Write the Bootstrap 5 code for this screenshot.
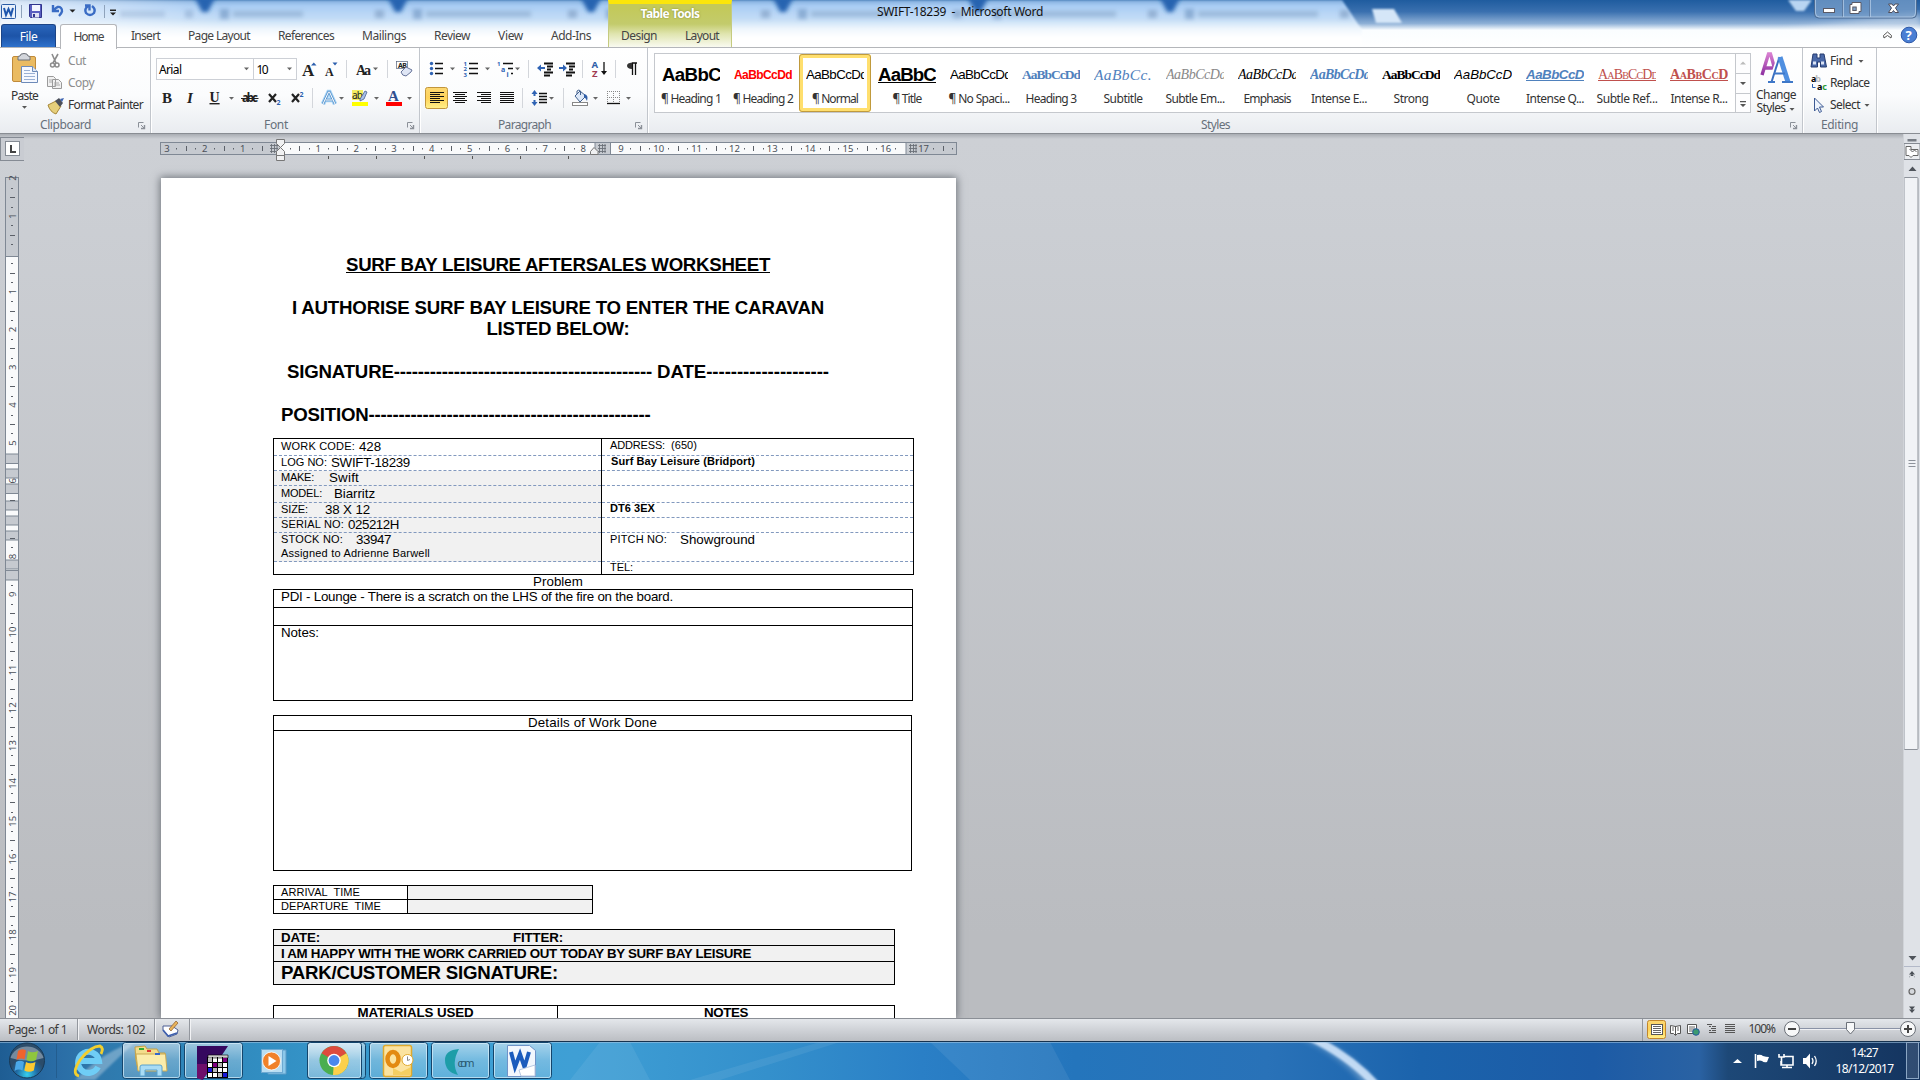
<!DOCTYPE html>
<html lang="en">
<head>
<meta charset="utf-8">
<title>SWIFT-18239 - Microsoft Word</title>
<link href="https://cdn.jsdelivr.net/npm/bootstrap@5.3.0/dist/css/bootstrap.min.css" rel="stylesheet">
<style>
body{width:1920px;height:1080px;overflow:hidden;font:12px/16px "Noto Sans","Open Sans",sans-serif;color:#3b3b3b;background:#fff}
svg{display:block;flex:none}
svg text{white-space:pre}
[data-w]{display:inline-block;white-space:pre;flex:none}
.titlebar{height:48px;position:relative;border-bottom:1px solid #b4b6ba;background:#fff}
.title-art{position:absolute;inset:0}
.title-row{position:relative;height:24px}
.qat{width:877px}
.title-text{padding-top:4px;color:#111}
.tab-file{width:55px;height:23px;margin-left:1px;background:linear-gradient(#2a66bb,#1d54a8 50%,#2f72cc);border:1px solid #1c4587;border-bottom:0;border-radius:3px 3px 0 0;color:#fff}
.tab-home{width:57px;height:25px;margin-left:4px;border:1px solid #b4b6ba;border-bottom:0;border-radius:3px 3px 0 0;background:#fff;position:relative;z-index:2}
.tabs-line{height:24px;position:relative;line-height:23px;color:#444}
.ctx{position:absolute;left:608px;top:0;width:124px;height:47px;background:linear-gradient(#c3c95a 4px,#c3cb6c 20px,#e0e5b0 30px,#fff 46px);border-top:4px solid #fbe60a;border-left:1px solid #c5cb80;border-right:1px solid #c5cb80}
.ctx div{color:#fff;font-weight:bold;text-shadow:0 0 2px #7c8030;margin-top:2px;text-align:center}
.ribbon{height:86px;background:linear-gradient(#fff,#fbfcfd 55%,#e9ecf0);border-bottom:1px solid #898d93}
.rgroup{border-right:1px solid #c2c6cc;box-shadow:1px 0 0 #fff;height:85px;flex:none;color:#333}
.rgroup .cap{height:16px;color:#67707b;line-height:15px}
.gallery{border:1px solid #c5c8cd;background:#fff;height:60px;width:1082px}
.gitem{width:72px;height:58px;text-align:center;padding-top:10px;position:relative;color:#333}
.gitem.sel{outline:1px solid #c09a3c;outline-offset:-1px;box-shadow:inset 0 0 0 4px #ffdf6e;border-radius:3px}
.samp{width:58px;height:24px;overflow:hidden;white-space:nowrap;margin:0 auto;font:13.33px/22px "Liberation Sans",Arial,sans-serif;color:#000;text-align:left}
.samp.serif{font-family:"Liberation Serif",serif;font-size:14px}
.blue{color:#4f81bd}.redd{color:#c0504d}
.glab{line-height:16px;margin-top:3px}
.workspace{height:884px;background:linear-gradient(#a9adb3 0,#cdd0d5 5px,#cccfd4 60px,#babcc0 800px)}
.leftcol{width:24px}
.sheet{margin-left:137px;width:795px;height:840px;background:#fff;box-shadow:0 0 8px 1px #6e737a;overflow:hidden;padding-top:75.5px;font-family:"Liberation Sans",Arial,sans-serif;color:#000}
.lines{margin-left:120px;width:554px;height:184.5px;font-size:18.67px;line-height:21.5px;font-weight:bold}
.lines>div{height:21.5px;white-space:nowrap}
.frame{margin-left:112px;border:1px solid #000}
.t8{font-size:11px}.t10{font-size:13.33px}
.r{display:flex;align-items:center;line-height:13px;padding-left:7px;flex:none}
.colL .r,.up{padding-bottom:2px}
.dash{border-bottom:1px dashed #8299be}
.line{border-bottom:1px solid #000}
.shade{background:#f1f1f1}
.colL{width:328px;border-right:1px solid #000}
.scrollcol{width:17px;background:#dfe2e7;border-left:1px solid #d0d3d8}
.statusbar{height:23px;border-top:1px solid #8b8f96;background:linear-gradient(#e4e7eb,#cfd2d7 50%,#bbbec3);line-height:21px}
.sep{width:1px;height:21px;background:#93979e;box-shadow:1px 0 #f2f3f5;flex:none}
.taskbar{height:39px;border-top:1px solid #16324f;position:relative}
.taskbar>svg{position:absolute;left:0;top:0}
.clock{position:absolute;left:1825px;width:79px;top:3px;color:#fff;text-align:center;line-height:16px}
</style>
<script src="https://cdn.jsdelivr.net/npm/bootstrap@5.3.0/dist/js/bootstrap.bundle.min.js"></script>
</head>
<body class="d-flex flex-column">
<svg width="0" height="0" class="position-absolute">
 <defs>
  <filter id="b2"><feGaussianBlur stdDeviation="3"/></filter>
  <filter id="b1"><feGaussianBlur stdDeviation="1.2"/></filter>
  <filter id="b3" x="-5%" y="-50%" width="110%" height="200%"><feGaussianBlur stdDeviation="2"/></filter>
  <linearGradient id="gDark" x2="0" y2="1"><stop offset="0" stop-color="#1f5c9f"/><stop offset=".25" stop-color="#3a70af"/><stop offset=".5" stop-color="#8eb0d6"/><stop offset=".64" stop-color="#fafdff"/><stop offset="1" stop-color="#fff"/></linearGradient>
  <linearGradient id="gLite" x2="0" y2="1"><stop offset="0" stop-color="#7eaada"/><stop offset=".12" stop-color="#a9cdf4"/><stop offset=".4" stop-color="#c3dcf6"/><stop offset=".62" stop-color="#f0f7fd"/><stop offset=".8" stop-color="#fff"/></linearGradient>
  <linearGradient id="gWhite" x1="0" x2="1"><stop offset="0" stop-color="#fff"/><stop offset="1" stop-color="#fff" stop-opacity="0"/></linearGradient>
  <linearGradient id="gTask"><stop offset="0" stop-color="#1e5d93"/><stop offset=".03" stop-color="#2a6da6"/><stop offset=".05" stop-color="#2f78ac"/><stop offset=".1" stop-color="#2e86ba"/><stop offset=".22" stop-color="#3a9fd3"/><stop offset=".3" stop-color="#3f9fd5"/><stop offset=".4" stop-color="#3490cc"/><stop offset=".48" stop-color="#2a7fc6"/><stop offset=".56" stop-color="#2475bc"/><stop offset=".66" stop-color="#2972b8"/><stop offset=".74" stop-color="#1b63ac"/><stop offset=".83" stop-color="#1c5ba6"/><stop offset=".885" stop-color="#2a62a3"/><stop offset=".9" stop-color="#1d4877"/><stop offset="1" stop-color="#14345f"/></linearGradient>
  <linearGradient id="gBtn" x2="0" y2="1"><stop offset="0" stop-color="#fff" stop-opacity=".55"/><stop offset=".5" stop-color="#fff" stop-opacity=".28"/><stop offset="1" stop-color="#fff" stop-opacity=".18"/></linearGradient>
  <linearGradient id="gSel" x2="0" y2="1"><stop offset="0" stop-color="#fcd873"/><stop offset=".5" stop-color="#ffd35a"/><stop offset="1" stop-color="#fff08a"/></linearGradient>
  <linearGradient id="gPurp" x2="0" y2="1"><stop offset="0" stop-color="#d77fd0"/><stop offset="1" stop-color="#8d2fa0"/></linearGradient>
  <linearGradient id="gBlueA" x2="0" y2="1"><stop offset="0" stop-color="#3a6fc0"/><stop offset="1" stop-color="#5aa0ea"/></linearGradient>
  <radialGradient id="gOrb" cy=".9"><stop offset="0" stop-color="#36d0ee"/><stop offset=".6" stop-color="#1f6ba5"/><stop offset="1" stop-color="#2b4c6a"/></radialGradient>
  <path id="dn" d="M-2.5-1h5L0 1.8z"/>
  <g id="launch" fill="none" stroke="#8b9098"><path d="M.5 5.5v-5h5M3 3l3 3"/><path d="M6.5 3v3.5H3" stroke-width="1.4"/></g>
  <g id="wico"><rect x=".5" y=".5" width="14" height="14" rx="1" fill="#e8f0fa" stroke="#2a5ba5"/><path d="M3 4l2 7 2.5-6L10 11l2-7" fill="none" stroke="#1f57ad" stroke-width="2"/></g>
 </defs>
</svg>

<header class="titlebar">
 <svg class="title-art" width="1920" height="47" id="titleArt">
  <rect width="1920" height="47" fill="url(#gDark)"/>
  <path d="M0 0H1342L1362 30V47H0z" fill="url(#gLite)" filter="url(#b1)"/>
  <rect width="220" height="47" fill="url(#gWhite)" opacity=".7"/>
  <g id="notches" filter="url(#b3)"></g>
  <path d="M1372 9h22l8 14h-26z" fill="#d5e6f8" filter="url(#b1)"/>
  <path d="M1788 0h24l-8 11h-8z" fill="#b9d5f2" filter="url(#b1)"/>
  <path d="M1780 30L1920 12v20z" fill="#fff" opacity=".35" filter="url(#b2)"/>
  <g><path d="M1814.500 -1V14q0 4 4 4H1912.500q4 0 4-4V-1" fill="#7ea3cc" fill-opacity=".7" stroke="#4c6b92"/><path d="M1842.500 0v17M1869.500 0v17" stroke="#5b7ba3"/><path d="M1843.500 0v17M1870.500 0v17M1815.500 0V13q0 4 4 4h92q4 0 4-4V0" fill="none" stroke="#b9d0ea" opacity=".7"/>
  <rect x="1823.500" y="8.500" width="11" height="4" fill="#fff" stroke="#5a5a66"/>
  <path d="M1852 2.500h9v9h-2v2h-9v-9h2z" fill="#fff" stroke="#5a5a66"/><rect x="1852.800" y="7" width="3.400" height="3.500" fill="#7ea3cc" stroke="#5a5a66"/>
  <path d="M1886 4h3.500l1.500 2 1.500-2h3.500l-3 4 3 4.500h-3.500l-1.500-2-1.500 2h-3.500l3-4.500z" fill="#fff" stroke="#4e4e5c" transform="translate(2.500)"/></g>
  <path d="M1884 38l-.5-2.500 4-3.500 4 3.500-.5 2.500-3.500-2.500z" fill="#fff" stroke="#555"/>
  <circle cx="1909" cy="35" r="7.800" fill="#4a7fd4" stroke="#2d58a8"/><text x="1905.500" y="40" font-size="13" font-weight="bold" fill="#fff">?</text>
 </svg>
 <div class="ctx"><div><span data-w="59">Table Tools</span></div></div>
 <div class="title-row d-flex">
  <div class="qat">
   <svg width="130" height="24" viewBox="0 0 130 24">
    <use href="#wico" x="1" y="4"/><path d="M21.500 5v13M104.500 5v13" stroke="#8fa3bb"/>
    <path d="M29.500 4.500h12v13h-11l-1-1z" fill="#5a5fc0" stroke="#30358c"/><rect x="32" y="5" width="8" height="6" fill="#f4f6ff"/><rect x="32" y="13" width="7" height="4.500" fill="#dfe2f4"/><rect x="33" y="14" width="2" height="3" fill="#30358c"/>
    <path d="M53 5v6h6M54 10q4-5 7-2 3 3-2 8" fill="none" stroke="#3a6cc4" stroke-width="2.400"/>
    <path d="M69.500 9.500h6l-3 3zM110 12.500h6l-3 3zM110 9.500h6v1.500h-6z" fill="#222"/>
    <path d="M92 6q4 3 2 7-4 4-8 0-2-4 2-7M85 5.500h4.500v5" fill="none" stroke="#3a6cc4" stroke-width="2.400"/>
   </svg>
  </div>
  <div class="title-text"><span data-w="166">SWIFT-18239  -  Microsoft Word</span></div>
 </div>
 <div class="tabs-line d-flex" id="tabs">
  <div class="tab-file text-center"><span data-w="17.500">File</span></div>
  <div class="tab-home text-center"><span data-w="30">Home</span></div>
 </div>
</header>

<section class="ribbon d-flex">
 <div class="rgroup" style="width:151px">
  <div class="d-flex" style="height:69px">
   <div style="width:46px;padding-left:11px">
    <svg width="30" height="40" viewBox="11 48 30 40"><rect x="12.500" y="56.500" width="23" height="25" rx="1.500" fill="#eabb62" stroke="#c08a3a"/><path d="M18 60v-3q0-1 2-1 0-2.500 4-2.500t4 2.500q2 0 2 1v3z" fill="#d3d6dc" stroke="#6b7078"/><path d="M21.500 66.500h11l5 5v11h-16z" fill="#f5f8ff" stroke="#6d8ab8"/><path d="M32.500 66.500v5h5" fill="#dce6f5" stroke="#6d8ab8"/><path d="M24 70.500h6M24 73.500h11M24 76.500h11M24 79.500h11" stroke="#9ab0d4"/></svg>
    <div style="line-height:15px"><span data-w="27">Paste</span></div><svg width="27" height="8" viewBox="0 0 27 8"><use href="#dn" x="13.500" y="4" fill="#555"/></svg>
   </div>
   <div class="d-flex flex-column" style="padding-top:2px">
    <div class="d-flex align-items-center" style="height:22px;color:#8d8d8d"><svg width="22" height="20" viewBox="48 51 22 20"><path d="M54 54l4 9M60 54l-5 9" stroke="#8c8c8c" stroke-width="1.600"/><circle cx="54.500" cy="65" r="2" fill="none" stroke="#8c8c8c" stroke-width="1.500"/><circle cx="59" cy="65" r="2" fill="none" stroke="#8c8c8c" stroke-width="1.500"/></svg><span data-w="18">Cut</span></div>
    <div class="d-flex align-items-center" style="height:22px;color:#8d8d8d"><svg width="22" height="20" viewBox="48 73 22 20"><path d="M49.500 76.500h6l2 2v8h-8zM54.500 79.500h6l3 3v6h-9z" fill="#f1f1f1" stroke="#9a9a9a"/><path d="M51 80h3M51 82h3M56 83h5M56 85h6" stroke="#aaa"/></svg><span data-w="26">Copy</span></div>
    <div class="d-flex align-items-center" style="height:22px"><svg width="22" height="20" viewBox="47 95 22 20"><path d="M49 105l8-4 5 5-5 8q-6-2-8-9z" fill="#e6cf7b" stroke="#a78738"/><path d="M56 101l4-3 4 5-3 4z" fill="#4b4f5a"/><path d="M61 99l4-1-2 4z" fill="#3b62b0"/></svg><span data-w="75">Format Painter</span></div>
   </div>
  </div>
  <div class="cap d-flex"><span style="width:40px"></span><span data-w="51">Clipboard</span><svg width="8" height="8" viewBox="0 0 8 8" style="margin:5px 0 0 47px"><use href="#launch"/></svg></div>
 </div>

 <div class="rgroup" style="width:269px">
  <svg width="268" height="69" viewBox="151 48 268 69" fill="#222">
   <g fill="#fff" stroke="#cdd0d6"><rect x="156.500" y="58.500" width="97" height="21"/><rect x="253.500" y="58.500" width="43" height="21"/></g>
   <text x="159" y="73.500" font-size="12" textLength="23" fill="#000">Arial</text><text x="256.500" y="73.500" font-size="12" textLength="12" fill="#000">10</text>
   <g fill="#666"><use href="#dn" x="246.500" y="68.500"/><use href="#dn" x="289.500" y="68.500"/><use href="#dn" x="375.500" y="68.500"/><use href="#dn" x="231.500" y="98"/><use href="#dn" x="341.500" y="98"/><use href="#dn" x="376.500" y="98"/><use href="#dn" x="409.500" y="98"/></g>
   <g font-family="Liberation Serif,serif" font-weight="bold"><text x="302" y="76" font-size="17">A</text><text x="325" y="76" font-size="12">A</text><text x="356" y="75" font-size="14" textLength="15">Aa</text>
   <text x="162" y="103" font-size="15">B</text><text x="187" y="103" font-size="15" font-style="italic">I</text><text x="209.500" y="102" font-size="14" text-decoration="underline">U</text></g>
   <path d="M311 65.500h5.500l-2.700-3zM332.500 62.500h5l-2.500 3z" fill="#2c5fae"/>
   <path d="M346.500 60v18M387.500 60v18M312.500 88v20" stroke="#d3d6db"/>
   <rect x="396.500" y="61.500" width="11" height="7" fill="#fff" stroke="#55617a" stroke-width=".7"/><text x="398" y="68" font-size="7" font-weight="bold" textLength="9">AB</text><path d="M401 72l5-5 6 3-1 2-5 4q-4 0-5-4z" fill="#dfe6f5" stroke="#67749a"/>
   <text x="242" y="102" font-size="11.500" font-weight="bold" textLength="16">abc</text><path d="M241 98.500h17.500" stroke="#222"/>
   <path d="M269 94l7 8M276 94l-7 8M292 94l7 8M299 94l-7 8" stroke="#222" stroke-width="2.200"/><text x="276.500" y="105" font-size="7" fill="#2c5fae" font-weight="bold">2</text><text x="299.500" y="96.500" font-size="7" fill="#2c5fae" font-weight="bold">2</text>
   <path d="M323 104l5.500-12h1l5.500 12M325.500 100h7" fill="none" stroke="#a8d5f7" stroke-width="4.500"/><path d="M323 104l5.500-12h1l5.500 12M325.500 100h7" fill="none" stroke="#5a94cc" stroke-width="2.600"/><path d="M323 104l5.500-12h1l5.500 12M325.500 100h7" fill="none" stroke="#fff" stroke-width="1"/>
   <rect x="352" y="90" width="11" height="10" fill="#f4ee62"/><text x="352" y="98.500" font-size="10" textLength="11">ab</text><path d="M360 99l5-8 2 1-3 7-4 2z" fill="#a8bfe8" stroke="#47608f" stroke-width=".8"/><rect x="352" y="102" width="16" height="4" fill="#ff0"/>
   <text x="388" y="100.500" font-size="15" font-weight="bold" font-family="Liberation Serif,serif" fill="#2e4f8f">A</text><rect x="386" y="102" width="16" height="4" fill="#f00"/>
  </svg>
  <div class="cap d-flex"><span style="width:113px"></span><span data-w="24">Font</span><svg width="8" height="8" viewBox="0 0 8 8" style="margin:5px 0 0 119px"><use href="#launch"/></svg></div>
 </div>

 <div class="rgroup" style="width:228px">
  <svg width="227" height="69" viewBox="420 48 227 69" stroke="#111" stroke-width="1.300">
   <rect x="425.500" y="87.500" width="22" height="21" rx="2" fill="url(#gSel)" stroke="#c2963c" stroke-width="1"/>
   <path d="M435 63.500h8M435 68.500h8M435 73.500h8M469 63.500h9M469 68.500h9M469 73.500h9M503 63.500h10M508 68.500h5M511 73.500h2"/>
   <path d="M544 63.500h9M547 66.500h6M547 69.500h4M544 72.500h9M544 75.500h6M566 63.500h9M569 66.500h6M569 69.500h4M566 72.500h9M566 75.500h6" stroke-width="1.800"/>
   <g stroke="none" fill="#2f63b4"><circle cx="431.500" cy="63.500" r="1.700"/><circle cx="431.500" cy="68.500" r="1.700"/><circle cx="431.500" cy="73.500" r="1.700"/><text font-size="6" font-weight="bold" x="463.500" y="65.500">1</text><text font-size="6" font-weight="bold" x="463.500" y="71">2</text><text font-size="6" font-weight="bold" x="463.500" y="76.500">3</text><text font-size="6" font-weight="bold" x="497" y="65.500">1</text><text font-size="7" font-weight="bold" x="501" y="71.500">a</text><text font-size="7" font-weight="bold" x="506.500" y="77">i</text><path d="M537 68l4-3.500v2.500h4v2h-4v2.500zM567 68l-4-3.500v2.500h-4v2h4v2.500z"/><path d="M534.500 90l3 4h-2v2h-2v-2h-2zM534.500 106l3-4h-2v-2h-2v2h-2z"/></g>
   <path d="M528.500 60v18M582.500 60v18M615.500 60v18M522.500 88v20M563.500 88v20" stroke="#d3d6db" stroke-width="1"/>
   <g stroke="none" font-weight="bold" font-size="9.500"><text x="591.500" y="68" fill="#2f5fa8">A</text><text x="592" y="76.500" fill="#a03a50">Z</text></g><path d="M604 62v11"/><path d="M601 71h6l-3 4z" fill="#111" stroke="none"/>
   <path d="M632 63h5M632.500 63v12M635.500 63v12" fill="none"/><path d="M632 62.500q-5 .5-5 3.200 0 3 5 3.300z" fill="#333" stroke="none"/>
   <path d="M430 92.500h14M430 94.500h10M430 96.500h14M430 98.500h10M430 100.500h14M430 102.500h10M453 92.500h14M455 94.500h10M453 96.500h14M455 98.500h10M453 100.500h14M455 102.500h10M477 92.500h14M481 94.500h10M477 96.500h14M481 98.500h10M477 100.500h14M481 102.500h10M500 92.500h14M500 94.500h14M500 96.500h14M500 98.500h14M500 100.500h14M500 102.500h14" stroke-width="1"/>
   <path d="M539 93.500h8M539 96.500h8M539 99.500h8M539 102.500h8"/>
   <path d="M575 96l5-5 6 5-6 6z" fill="#dde8f8" stroke="#42618f" stroke-width="1"/><path d="M577 94v-3q2-2 3.500 0v4" fill="none" stroke="#42618f" stroke-width="1"/><path d="M584 94q5 1 3 7-2-4-3-4z" fill="#2f5ea8" stroke="none"/><rect x="572.500" y="102.500" width="15" height="3" fill="#fff" stroke="#888" stroke-width="1"/>
   <path d="M607.500 91v12M613.500 91v12M619.500 91v12M607 91.500h13M607 97.500h13" stroke="#888" stroke-dasharray="1 1" stroke-width="1"/><path d="M607 103.500h13"/>
   <g fill="#666" stroke="none"><use href="#dn" x="452.500" y="68.500"/><use href="#dn" x="487.500" y="68.500"/><use href="#dn" x="517.500" y="68.500"/><use href="#dn" x="551.500" y="98"/><use href="#dn" x="595.500" y="98"/><use href="#dn" x="628.500" y="98"/></g>
  </svg>
  <div class="cap d-flex"><span style="width:78px"></span><span data-w="53">Paragraph</span><svg width="8" height="8" viewBox="0 0 8 8" style="margin:5px 0 0 84px"><use href="#launch"/></svg></div>
 </div>

 <div class="rgroup" style="width:1155px">
  <div class="d-flex" style="height:69px;padding:5px 0 0 6px">
   <div class="gallery d-flex" id="gallery"></div>
   <svg width="15" height="60" viewBox="0 0 15 60"><g fill="#fdfdfe" stroke="#c5c8cd"><rect x="-.5" y=".5" width="15" height="20"/><rect x="-.5" y="20.500" width="15" height="20"/><rect x="-.5" y="40.500" width="15" height="19"/></g><path d="M4 11.500h6l-3-3z" fill="#bbb"/><path d="M4 29h6l-3 3zM4 51h6l-3 3zM4 48h6v1.200H4z" fill="#555"/></svg>
   <div class="text-center" style="width:50px;line-height:13px">
    <svg width="50" height="36" viewBox="1751 53 50 36" style="margin-top:-1px"><path d="M1762 76l6.500-21h2l6 21M1764 69h10" fill="none" stroke="url(#gPurp)" stroke-width="3.400"/><path d="M1768 83h7M1771 83l8.500-25L1789 83M1783 83h10M1774 74.500h11" fill="none" stroke="#fff" stroke-width="5"/><path d="M1771.500 83l8-25" stroke="#3a6fc0" stroke-width="2"/><path d="M1780 58l8 25" stroke="#4f8fe0" stroke-width="5"/><path d="M1768 83h7M1782 83h11M1774 74.500h11" stroke="#3f78c8" stroke-width="2"/></svg>
    <span data-w="40">Change</span><br><span data-w="29">Styles</span><svg width="8" height="8" viewBox="0 0 8 8" class="d-inline-block" style="margin-left:2px"><use href="#dn" x="4" y="4" fill="#555"/></svg>
   </div>
  </div>
  <div class="cap d-flex"><span style="width:553px"></span><span data-w="29">Styles</span><svg width="8" height="8" viewBox="0 0 8 8" style="margin:5px 0 0 560px"><use href="#launch"/></svg></div>
 </div>

 <div class="rgroup" style="width:74px">
  <div style="height:69px;padding-top:2px">
   <div class="d-flex align-items-center" style="height:22px"><svg width="27" height="20" viewBox="1803 51 27 20"><path d="M1813 54h4v4h3v-4h4l2.500 13h-6v-5h-3v5h-6.500z" fill="#4a69a8" stroke="#263c70"/><path d="M1813 63h3M1821 63h3" stroke="#dbe4f5" stroke-width="3"/></svg><span data-w="22.500">Find</span><svg width="16" height="8" viewBox="0 0 16 8"><use href="#dn" x="8" y="4" fill="#555"/></svg></div>
   <div class="d-flex align-items-center" style="height:22px"><svg width="27" height="20" viewBox="1803 73 27 20"><text x="1811" y="81.500" font-size="9" font-weight="bold" textLength="10">a<tspan fill="#bbb">b</tspan></text><text x="1817" y="90" font-size="9" font-weight="bold" textLength="10">a<tspan fill="#2a9a3a">c</tspan></text><path d="M1812.500 84v3.500h3" fill="none" stroke="#2c5fae"/></svg><span data-w="39.500">Replace</span></div>
   <div class="d-flex align-items-center" style="height:22px"><svg width="27" height="20" viewBox="1803 95 27 20"><path d="M1814.500 98v13l3-3 2 4.500 2-1-2-4.500h4z" fill="#eef4fd" stroke="#3d5a94"/></svg><span data-w="30">Select</span><svg width="14" height="8" viewBox="0 0 14 8"><use href="#dn" x="7" y="4" fill="#555"/></svg></div>
  </div>
  <div class="cap text-center"><span data-w="37">Editing</span></div>
 </div>
</section>

<main class="workspace d-flex">
 <div class="leftcol"><svg width="24" height="884" viewBox="0 134 24 884" id="vruler"></svg></div>
 <div class="flex-grow-1">
  <svg width="940" height="44" viewBox="24 134 940 44" id="hruler"></svg>
  <article class="sheet">
   <div class="lines text-center">
    <div><u data-w="424">SURF BAY LEISURE AFTERSALES WORKSHEET</u></div><div></div>
    <div><span data-w="532">I AUTHORISE SURF BAY LEISURE TO ENTER THE CARAVAN</span></div>
    <div><span data-w="143">LISTED BELOW:</span></div><div></div>
    <div><span data-w="365">SIGNATURE-------------------------------------------</span><span data-w="177"> DATE--------------------</span></div><div></div>
    <div class="text-start"><span data-w="369.500">POSITION-----------------------------------------------</span></div>
   </div>
   <div class="frame d-flex t8" style="width:641px;height:137px">
    <div class="colL">
     <div class="r dash" style="height:17px"><span data-w="74">WORK CODE:</span><span data-w="22" class="t10 ms-1">428</span></div>
     <div class="r dash" style="height:15px"><span data-w="46">LOG NO:</span><span data-w="79" class="t10 ms-1">SWIFT-18239</span></div>
     <div class="r dash shade" style="height:15px"><span data-w="33">MAKE:</span><span data-w="30" class="t10" style="margin-left:15px">Swift</span></div>
     <div class="r dash shade" style="height:17px"><span data-w="41">MODEL:</span><span data-w="41" class="t10" style="margin-left:12px">Biarritz</span></div>
     <div class="r dash shade" style="height:15px"><span data-w="27">SIZE:</span><span data-w="45" class="t10" style="margin-left:17px">38 X 12</span></div>
     <div class="r dash shade" style="height:15px"><span data-w="63">SERIAL NO:</span><span data-w="51" class="t10 ms-1">025212H</span></div>
     <div class="shade dash" style="height:29px"><div class="r" style="height:14px"><span data-w="62">STOCK NO:</span><span data-w="35" class="t10" style="margin-left:13px">33947</span></div><div class="r pb-0" style="height:13px"><span data-w="149">Assigned to Adrienne Barwell</span></div></div>
    </div>
    <div class="flex-grow-1">
     <div class="r dash" style="height:17px;padding-bottom:3px;padding-left:8px"><span data-w="55">ADDRESS:</span><span data-w="26" style="margin-left:6px">(650)</span></div>
     <div class="r dash fw-bold" style="height:15px;padding-bottom:3px;padding-left:9px"><span data-w="144">Surf Bay Leisure (Bridport)</span></div>
     <div class="r dash" style="height:15px"></div>
     <div class="r dash" style="height:17px"></div>
     <div class="r dash fw-bold" style="height:15px;padding-bottom:3px;padding-left:8px"><span data-w="45">DT6 3EX</span></div>
     <div class="r dash" style="height:15px"></div>
     <div class="dash" style="height:29px"><div class="r up" style="height:14px;padding-left:8px"><span data-w="57">PITCH NO:</span><span data-w="75" class="t10" style="margin-left:13px">Showground</span></div></div>
     <div class="r up" style="height:12px;padding-left:8px"><span data-w="23">TEL:</span></div>
    </div>
   </div>
   <div class="t10 r up" style="height:14px;padding-left:372px"><span data-w="50">Problem</span></div>
   <div class="frame t10" style="width:640px;height:112px">
    <div class="r line" style="height:18px;padding-bottom:4px"><span data-w="392">PDI - Lounge - There is a scratch on the LHS of the fire on the board.</span></div>
    <div class="r line" style="height:18px"></div>
    <div class="r up" style="height:15px"><span data-w="38">Notes:</span></div>
   </div>
   <div class="frame t10" style="width:639px;height:156px;margin-top:14px">
    <div class="r line justify-content-center" style="height:15px;padding:0 0 2px"><span data-w="129">Details of Work Done</span></div>
   </div>
   <div class="frame t8 d-flex" style="width:320px;height:29px;margin-top:14px">
    <div style="width:134px;border-right:1px solid #000"><div class="r line" style="height:14px"><span data-w="79">ARRIVAL  TIME</span></div><div class="r" style="height:13px"><span data-w="100">DEPARTURE  TIME</span></div></div>
    <div class="flex-grow-1 shade"><div class="line" style="height:14px"></div></div>
   </div>
   <div class="frame t10 fw-bold shade" style="width:622px;height:56px;margin-top:15px">
    <div class="r line" style="height:16px"><span data-w="39">DATE:</span><span data-w="50" style="margin-left:193px">FITTER:</span></div>
    <div class="r line" style="height:16px"><span data-w="470">I AM HAPPY WITH THE WORK CARRIED OUT TODAY BY SURF BAY LEISURE</span></div>
    <div class="r" style="height:22px;font-size:18.67px;line-height:20px"><span data-w="277">PARK/CUSTOMER SIGNATURE:</span></div>
   </div>
   <div class="frame t10 fw-bold d-flex" style="width:622px;height:30px;margin-top:20px;line-height:14px">
    <div class="text-center" style="width:284px;border-right:1px solid #000"><span data-w="116">MATERIALS USED</span></div>
    <div class="flex-grow-1 text-center"><span data-w="44">NOTES</span></div>
   </div>
  </article>
 </div>
 <div class="scrollcol">
  <svg width="17" height="884" viewBox="1903.500 134 17 884"><rect x="1907" y="139" width="9" height="2.500" fill="#777c84"/><rect x="1903.500" y="143.500" width="16" height="16" fill="#eceef1" stroke="#858a92"/><path d="M1905.500 146.500h5v3h7v6h-5l-2 2-2-2h-3zM1909 149l3 3 2-2 2 2" fill="#fff" stroke="#666"/>
  <path d="M1908 171h8l-4-4.500zM1908 956h8l-4 4.500z" fill="#4f545b"/><rect x="1903.500" y="177.500" width="14" height="572" rx="1" fill="#f1f3f6" stroke="#8e939b"/><path d="M1908 460.500h7M1908 463.500h7M1908 466.500h7" stroke="#8e939b"/><path d="M1903 966.500h17" stroke="#b3b9c8"/>
  <g fill="#4a4f56"><path d="M1908.500 974.500h6l-3-3.500zM1908.500 977.500h6l-3-3.500zM1909 976h5v1.500h-5zM1908.500 1006.500h6l-3 3.500zM1908.500 1009.500h6l-3 3.500z"/></g><circle cx="1911.500" cy="991.500" r="3" fill="#d4d7dc" stroke="#666" stroke-width="1.200"/></svg>
 </div>
</main>

<footer class="statusbar d-flex">
 <span style="width:8px"></span><span data-w="59">Page: 1 of 1</span><span style="width:10px"></span><i class="sep"></i><span style="width:9px"></span><span data-w="58">Words: 102</span><span style="width:9px"></span><i class="sep"></i>
 <svg width="34" height="21" viewBox="155 1019 34 21"><path d="M163 1026h9l6 4-1 4-8 3-6-7z" fill="#fff" stroke="#4c5f94"/><path d="M163 1030l5 6 9-3" fill="none" stroke="#3f60ae" stroke-width="1.800"/><path d="M169 1029l7-8 2 2-7 8z" fill="#e8b25a" stroke="#8a5a2a" stroke-width=".7"/></svg>
 <i class="sep"></i>
 <svg class="ms-auto" width="280" height="22" viewBox="1640 1019 280 22">
  <path d="M1642.500 1019v22" stroke="#93979e"/><rect x="1647.500" y="1020.500" width="18" height="18" rx="2" fill="url(#gSel)" stroke="#c2862c"/>
  <g fill="#fff" stroke="#555"><rect x="1651.500" y="1024.500" width="11" height="10"/><path d="M1670.500 1025.500l5 1 5-1v8h-3l-2 2-2-2h-3zM1675.500 1026v9M1687.500 1024.500h9v9h-9z"/></g>
  <path d="M1653 1026.500h8M1653 1028.500h8M1653 1030.500h8M1653 1032.500h8M1672 1028h2M1672 1030h2M1677 1028h2M1677 1030h2M1689 1027h6M1689 1029h6M1689 1031h4" stroke="#666"/><circle cx="1696" cy="1032" r="3.300" fill="#3b9a70" stroke="#2558a0"/>
  <path d="M1707 1024.500h5M1709 1026.500h2M1712 1026.500h4M1711 1028.500h5M1709 1030.500h2M1712 1030.500h4M1709 1032.500h7M1725 1024.500h10M1725 1026.500h10M1725 1028.500h10M1725 1030.500h10M1725 1032.500h10" stroke="#555"/>
  <text x="1748.500" y="1033" font-size="12" textLength="27.500" fill="#3b3b3b">100%</text>
  <path d="M1800 1028.500h100" stroke="#8a92a6"/><path d="M1800 1029.500h100" stroke="#f0f1f4"/><g fill="#f7f8f9" stroke="#6b7078"><circle cx="1792" cy="1029" r="7.500"/><circle cx="1908" cy="1029" r="7.500"/><path d="M1846.500 1022.500h8v7l-4 4.500-4-4.500z"/></g><path d="M1788 1029h8M1904 1029h8M1908 1025v8" stroke="#444" stroke-width="2"/>
 </svg>
</footer>

<nav class="taskbar">
 <svg width="1920" height="38" viewBox="0 1042 1920 38">
  <rect y="1042" width="1920" height="38" fill="url(#gTask)"/>
  <g fill="#fff"><path d="M1298 1036h16q42 22 62 48h-12q-24-30-66-48z" opacity=".35" filter="url(#b2)"/><path d="M1308 1036q42 20 69 50" fill="none" stroke="#d5e8fd" stroke-width="8" opacity=".85" filter="url(#b1)"/><path d="M600 1042h30l20 38h-80zM820 1042h20l-120 38h-30zM930 1042h120l20 38h-100z" opacity=".07"/><path d="M75 1080q30-30 60-38l-40 38z" opacity=".3" filter="url(#b1)"/></g>
  <path d="M0 1042.500h1920" stroke="#9fc4e2" opacity=".6"/>
  <path d="M56.500 1044v34" stroke="#1d4f7a" opacity=".5"/>
  <g fill="url(#gBtn)" stroke="#14456c"><rect x="122.500" y="1042.500" width="58" height="36" rx="3"/><rect x="184.500" y="1042.500" width="58" height="36" rx="3"/><rect x="307.500" y="1042.500" width="58" height="36" rx="3"/><rect x="307.500" y="1042.500" width="54" height="36" rx="3"/><rect x="369.500" y="1042.500" width="58" height="36" rx="3"/><rect x="431.500" y="1042.500" width="58" height="36" rx="3"/><rect x="493.500" y="1042.500" width="58" height="36" rx="3"/></g>
  <g fill="none" stroke="#d8effb" opacity=".7"><rect x="123.500" y="1043.500" width="56" height="34" rx="2"/><rect x="185.500" y="1043.500" width="56" height="34" rx="2"/><rect x="308.500" y="1043.500" width="52" height="34" rx="2"/><rect x="370.500" y="1043.500" width="56" height="34" rx="2"/><rect x="432.500" y="1043.500" width="56" height="34" rx="2"/><rect x="494.500" y="1043.500" width="56" height="34" rx="2"/></g>
  <circle cx="27" cy="1060.500" r="17.500" fill="url(#gOrb)" stroke="#183a58"/><path d="M10.500 1058a17 15 0 0 1 33 0q-16 5-33 0z" fill="#fff" opacity=".35"/>
  <path d="M18 1051q4-3 8-.5l-1.500 9q-4-2-8 .5z" fill="#f0642c"/><path d="M28 1051q4 2.500 10 0l-2 9q-5 2.500-9.500 0z" fill="#8fc63d"/><path d="M16 1062q4-2.500 8 0l-1.500 8.500q-4-2-8 .5z" fill="#4aa8e8"/><path d="M26 1062q4 2.500 9.500 0l-1.700 8.500q-5 2.500-9.500 0z" fill="#fcc931"/>
  <path d="M98 1067a10.500 10.500 0 1 1 1-6h-20" fill="none" stroke="#6fcdf6" stroke-width="6"/><path d="M79 1076q-8-2 1-16 11-14 20-14 4 2 1 8" fill="none" stroke="#f2cf2f" stroke-width="2.800"/>
  <path d="M135 1047l10-1 2 3h10l2 4h6v17h-27q-3-11-3-23z" fill="#f3dc8b" stroke="#c2a046"/><path d="M136 1054h29.500l1.500 17h-29z" fill="#fbecab" stroke="#c9aa55"/><path d="M139 1048h5v2h-5z" fill="#3a3"/><path d="M147 1050h4v2h-4z" fill="#d33"/><path d="M155 1053h5v2h-5z" fill="#36c"/><path d="M140 1076v-9q0-2 2-2h18q2 0 2 2v9h-5v-6h-12v6z" fill="#a9dcf5" stroke="#5aa2cd"/>
  <path d="M197 1046h31l-8 12q-14 14-17 22l-6-4z" fill="#35085f"/><path d="M197 1064h10v10l-5 6-5-2z" fill="#6d0f6a"/><rect x="207.500" y="1057.500" width="20" height="20" fill="#fff" stroke="#000"/><path d="M208 1055h20v3h-20z" fill="#ccc" stroke="#000" stroke-width=".6"/><path d="M213 1062h5v5h-5zM223 1058h4v4h-4z" fill="#800080"/><path d="M208 1067h5v5h-5zM222 1072h5v5h-5z" fill="#1818d8"/><path d="M208 1058h5v4h-5zM218 1062h4v5h-4zM213 1067h5v5h-5zM218 1072h4v5h-4z" fill="#b9b9b9"/><path d="M212.500 1057v20M217.500 1057v20M222.500 1057v20M208 1062.500h20M208 1067.500h20M208 1072.500h20" stroke="#000"/>
  <path d="M268 1050h18v24h-18z" fill="#8cc8ea" stroke="#5c9cc8"/><rect x="261.500" y="1049.500" width="21" height="23" fill="#b9def3" stroke="#6da9d2"/><circle cx="271.500" cy="1061" r="9" fill="#f0812a" stroke="#fff" stroke-width=".8"/><path d="M268.500 1056v10l8-5z" fill="#fff"/>
  <circle cx="334" cy="1060.500" r="14.500" fill="#4aae50"/><path d="M334 1060.500L321.500 1053.200A14.500 14.500 0 0 1 346.500 1053.200z" fill="#dd4b3e"/><path d="M334 1060.500l12.500-7.300A14.500 14.500 0 0 1 333 1075z" fill="#fcd04b"/><circle cx="334" cy="1060.500" r="6.800" fill="#fff"/><circle cx="334" cy="1060.500" r="5.400" fill="#4a87ee"/>
  <rect x="383.500" y="1045.500" width="28" height="31" rx="2" fill="#fbe3a0" stroke="#e0a92c" stroke-width="1.500"/><ellipse cx="393" cy="1059" rx="5.500" ry="7" fill="none" stroke="#e38a12" stroke-width="4.500"/><circle cx="407.500" cy="1060" r="5.500" fill="#fff" stroke="#e0a92c"/><path d="M407.500 1056.500v4l2.500-1" fill="none" stroke="#888"/><path d="M393 1068l8 4 10-5v8h-18z" fill="#f5cf62"/>
  <path d="M459 1049q-14 1-14 11 0 12 13 15-7-12 1-26z" fill="#1d9da8"/><text x="457.500" y="1067" font-size="11" fill="#2a5a70" textLength="17">com</text>
  <path d="M507.500 1045.500h22l6 5v26h-28z" fill="#f2f7fd" stroke="#6f93c7"/><path d="M511 1052l4 15 5-13 4.500 13 4.500-15" fill="none" stroke="#1b5cbd" stroke-width="4"/><path d="M519 1070l16-5v11h-14z" fill="#fff" stroke="#b7c9e2"/>
  <path d="M1733 1063h9l-4.500-4z" fill="#fff"/><path d="M1755.500 1054v14" stroke="#fff" stroke-width="1.600"/><path d="M1757 1055q4-1 6 1 3 1 6 1l-2 5q-3 1-5-1-2-1-5 0z" fill="#fff"/>
  <path d="M1784 1056.500h9v8.500h-12v-4M1787 1065v3M1782 1067.500h10M1779 1054v3h5v-3M1781.500 1057v8" fill="none" stroke="#fff" stroke-width="1.600"/>
  <path d="M1803 1058h3l4-4.500v15l-4-4.500h-3z" fill="#fff"/><path d="M1812 1058q2 3 0 6M1814.500 1056q3.500 5 0 10" fill="none" stroke="#fff" stroke-width="1.300"/>
  <rect x="1906.500" y="1042.500" width="12" height="36" fill="#fff" fill-opacity=".12" stroke="#8ba6c4"/>
 </svg>
 <div class="clock"><span data-w="27">14:27</span><br><span data-w="58">18/12/2017</span></div>
</nav>

<script>
// Ribbon tabs: label, left edge, width
let x=117,tabs=document.getElementById('tabs');
[['Insert',131,29],['Page Layout',188,62],['References',278,56],['Mailings',362,44],['Review',434,36],['View',498,25],['Add-Ins',551,40],['Design',621,36],['Layout',685,34]].forEach(t=>{
 tabs.insertAdjacentHTML('beforeend',`<span data-w="${t[2]}" style="margin-left:${t[1]-x}px">${t[0]}</span>`);x=t[1]+t[2];});
// Style gallery: label, label width, sample, sample width, classes, css
document.getElementById('gallery').innerHTML=[
['¶ Heading 1',60,'AaBbC',59,'fw-bold','font-size:18.67px'],['¶ Heading 2',60,'AaBbCcDd',58,'fw-bold','color:#f00;font-size:12px'],
['¶ Normal',46,'AaBbCcDd',61,'',''],['¶ Title',29,'AaBbC',58,'fw-bold','font-size:18.67px;text-decoration:underline'],['¶ No Spaci...',61,'AaBbCcDd',61,'',''],
['Heading 3',51,'AaBbCcDd',58,'serif fw-bold blue','font-size:13.5px'],['Subtitle',39,'AaBbCc.',58,'serif fst-italic blue','font-size:15.5px'],
['Subtle Em...',59,'AaBbCcDd',60,'serif fst-italic','color:#888'],['Emphasis',47,'AaBbCcDd',60,'serif fst-italic',''],['Intense E...',56,'AaBbCcDd',60,'serif fst-italic fw-bold blue',''],
['Strong',35,'AaBbCcDd',58,'serif fw-bold','font-size:13.5px'],['Quote',33,'AaBbCcD',58,'fst-italic',''],['Intense Q...',58,'AaBbCcD',58,'fst-italic fw-bold blue','text-decoration:underline'],
['Subtle Ref...',61,'AaBbCcDd',60,'serif redd','font-variant:small-caps;text-decoration:underline'],['Intense R...',57,'AaBbCcD',58,'serif fw-bold redd','font-variant:small-caps;text-decoration:underline']
].map((g,i)=>`<div class="gitem flex-shrink-0 ${i==2?'sel':''}"><div class="samp ${g[4]}" style="${g[5]}"><span data-w="${g[3]}" style="text-decoration:inherit">${g[2]}</span></div><div class="glab"><span data-w="${g[1]}">${g[0]}</span></div></div>`).join('');
// Glass tabs showing through the title bar
let n='';[205,398,591,783,978,1170].forEach((c,i)=>{n+=`<path d="M${c-11} -4h22l-8 16h-6z" fill="#2563b0"/><rect x="${c+28}" y="11" width="${[70,105,90,80,110,120][i]}" height="6" fill="#7f9fc4" opacity=".5"/><rect x="${c+170}" y="10" width="9" height="8" fill="#6d8db4" opacity=".5"/><rect x="${c+15}" y="9" width="9" height="10" fill="#5d84b4" opacity=".5"/>`});
n+='<rect x="120" y="11" width="45" height="6" fill="#7f9fc4" opacity=".35"/><rect x="185" y="10" width="8" height="8" fill="#6d8db4" opacity=".35"/>';
document.getElementById('notches').innerHTML=n;
// Horizontal ruler
const CM=37.83;let h='<rect x="160.5" y="142.500" width="796" height="12" fill="#c6cad0" stroke="#7f8894"/><rect x="280" y="143" width="315" height="11" fill="#f9fafb"/><rect x="610.5" y="143" width="295.500" height="11" fill="#f9fafb"/><path d="M595 143v11M610.500 143v11M906 143v11" stroke="#7f8894"/>';
for(let q=-12;q<=71;q++){const px=280.5+q*CM/4;if(px<163||px>953||q==0||(px>592&&px<613)||(px>903&&px<916))continue;
 if(q%4==0)h+=`<text x="${px}" y="152" font-size="9.500" text-anchor="middle" fill="#4b5058">${Math.abs(q/4)}</text>`;
 else if(q%2==0)h+=`<path d="M${Math.round(px)+.5} 146v5" stroke="#5b6068"/>`;else h+=`<path d="M${Math.round(px)+.5} 148v1.500" stroke="#5b6068"/>`;}
[328,376,424,472,520,568].forEach(t=>h+=`<path d="M${t}.5 156v3" stroke="#555"/>`);
[270,598,909].forEach(t=>h+=`<path d="M${t} 145.500h8M${t} 148.500h8M${t} 151.500h8M${t+1.500} 144v9M${t+4.500} 144v9M${t+7} 144v9" stroke="#6b7078" stroke-width=".9"/>`);
h+='<g fill="#f0f1f2" stroke="#777"><path d="M276.500 139.500h8v4l-4 4-4-4zM276.500 155.500v-4l4-4 4 4v4zM276.500 155.500h8v5h-8zM590.500 154.500v-3l3.500-4 4 4v3z"/></g>';
document.getElementById('hruler').innerHTML=h;
// Vertical ruler with the tab selector above it
let v='<rect x=".5" y="137.500" width="24" height="23" fill="#c9ccd2" stroke="#858b94"/><rect x="5.500" y="141.500" width="14" height="14" fill="#fff" stroke="#858b94"/><path d="M11 145v7h5" fill="none" stroke="#444" stroke-width="2"/><rect x="5.500" y="177.500" width="13" height="845" fill="#f9fafb" stroke="#7f8894"/><rect x="6" y="178" width="12" height="78" fill="#c6cad0"/><path d="M6 256.500h12" stroke="#7f8894"/>';
[[454,463.5],[469,478],[484,493.500],[501,510],[516,525],[531,540],[560,569],[570.500,580]].forEach(s=>v+=`<rect x="5.500" y="${s[0]}" width="13" height="${s[1]-s[0]}" fill="#c6cad0" stroke="#7f8894"/>`);
for(let q=-8;q<=80;q++){const py=253.800+q*CM/4;if(py<177||q==0||(py>452&&py<582&&![24,26,30].includes(q)&&q!=32&&q!=31))continue;
 if(q%4==0)v+=`<text transform="translate(15.500 ${py}) rotate(-90)" font-size="9.500" text-anchor="middle" fill="#4b5058">${Math.abs(q/4)}</text>`;
 else if(q%2==0)v+=`<path d="M10 ${Math.round(py)+.5}h5" stroke="#5b6068"/>`;else v+=`<path d="M11 ${Math.round(py)+.5}h2" stroke="#5b6068"/>`;}
document.getElementById('vruler').innerHTML=v;
// Tune tracking so each label takes its set width
document.querySelectorAll('[data-w]').forEach(e=>{const w=+e.dataset.w,c=e.textContent.length;e.style.letterSpacing=(w-e.getBoundingClientRect().width)/c+'px';});
</script>
</body>
</html>
